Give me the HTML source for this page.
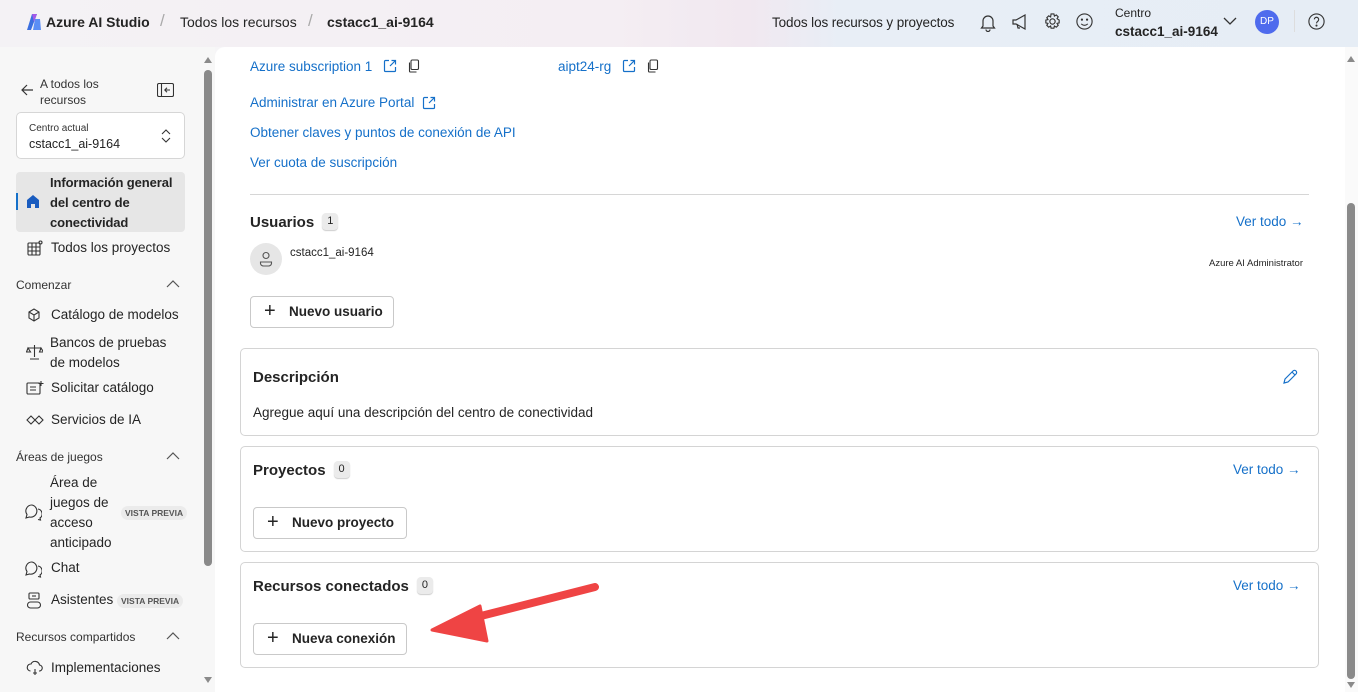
<!DOCTYPE html>
<html><head><meta charset="utf-8"><style>
*{box-sizing:border-box;margin:0;padding:0}
body{width:1358px;height:692px;overflow:hidden;font-family:"Segoe UI","Liberation Sans",sans-serif;color:#242424;background:#f6f5f7;position:relative;font-size:14px}
.a{position:absolute;white-space:nowrap}
.hdr{position:absolute;left:0;top:0;width:1358px;height:47px;background:linear-gradient(90deg,#f4f2f5 0%,#f4eef3 45%,#f1e8f0 55%,#e8eef6 62%,#e6edf5 100%)}
.side{position:absolute;left:0;top:47px;width:215px;height:645px;background:#f7f7f7}
.main{position:absolute;left:215px;top:47px;width:1130px;height:645px;background:#fff;border-top-left-radius:10px}
.lnk{color:#1570c9;font-size:13.5px}
.card{position:absolute;left:240px;width:1079px;border:1px solid #d4d4d4;border-radius:5px;background:#fff}
.btn{position:absolute;border:1px solid #c9c9c9;border-radius:4px;background:#fff;font-weight:600;font-size:13.5px;height:32px;line-height:30px;padding-left:38px}
.btn:before{content:"+";position:absolute;left:13px;top:-1px;font-weight:300;font-size:20px}
.badge{display:inline-block;background:#ebebeb;border-radius:4px;font-size:11px;font-weight:400;padding:0 5px;margin-left:8px;vertical-align:3px;line-height:17px;box-shadow:0 1px 1px #ccc}
.h{font-size:15px;font-weight:600}
.si{font-size:13.5px;color:#242424}
.sec{font-size:12px;color:#333}
.pv{background:#ebebeb;border-radius:9px;font-size:8.5px;font-weight:600;color:#555;padding:2px 4px}
svg{position:absolute}
</style></head><body>
<div class="hdr"></div>
<svg style="left:26px;top:13px" width="16" height="18" viewBox="0 0 16 18"><path d="M6 1h5l-6 16H1z" fill="#3b6fe0"/><path d="M9 6h5l1 11h-8z" fill="#5b8ef5"/><path d="M6 1h5l-3 8z" fill="#a45ae8"/></svg>
<div class="a" style="left:46px;top:14px;font-size:14px;font-weight:600">Azure AI Studio</div>
<div class="a" style="left:160px;top:11px;font-size:17px;color:#aaa">/</div>
<div class="a" style="left:180px;top:14px;font-size:14px">Todos los recursos</div>
<div class="a" style="left:308px;top:11px;font-size:17px;color:#aaa">/</div>
<div class="a" style="left:327px;top:14px;font-size:14px;font-weight:600">cstacc1_ai-9164</div>
<div class="a" style="left:772px;top:15px;font-size:13.5px;letter-spacing:-0.1px">Todos los recursos y proyectos</div>
<svg style="left:979px;top:13px" width="18" height="19" viewBox="0 0 18 19" fill="none" stroke="#333" stroke-width="1.2"><path d="M4 13V8a5 5 0 0110 0v5l1.5 2h-13z M7 16.5a2 2 0 004 0"/></svg>
<svg style="left:1011px;top:13px" width="20" height="18" viewBox="0 0 20 18" fill="none" stroke="#333" stroke-width="1.2"><path d="M2 7v4h3l9 5V2L5 7z M6 11l1 4h2"/></svg>
<svg style="left:1043px;top:12px" width="19" height="19" viewBox="0 0 20 20" fill="none" stroke="#333" stroke-width="1.2"><circle cx="10" cy="10" r="2.8"/><path d="M8.5 2h3l.5 2.3 2-1.2 2 2-1.2 2L17 8.5v3l-2.2.5 1.2 2-2 2-2-1.2-.5 2.2h-3L8 14.8l-2 1.2-2-2 1.2-2L3 11.5v-3l2.2-.5L4 6l2-2 2 1.2z"/></svg>
<svg style="left:1075px;top:12px" width="19" height="19" viewBox="0 0 20 20" fill="none" stroke="#333" stroke-width="1.2"><circle cx="10" cy="10" r="8"/><circle cx="7.3" cy="8" r=".6" fill="#333"/><circle cx="12.7" cy="8" r=".6" fill="#333"/><path d="M6.5 12.5q3.5 3 7 0"/></svg>
<div class="a" style="left:1115px;top:6px;font-size:12px">Centro</div>
<div class="a" style="left:1115px;top:24px;font-size:13.5px;font-weight:600">cstacc1_ai-9164</div>
<svg style="left:1222px;top:16px" width="16" height="10" viewBox="0 0 16 10" fill="none" stroke="#333" stroke-width="1.3"><path d="M2 2l6 6 6-6"/></svg>
<div class="a" style="left:1255px;top:10px;width:24px;height:24px;border-radius:50%;background:#4f6bed;color:#fff;font-size:10px;text-align:center;line-height:24px">DP</div>
<div class="a" style="left:1294px;top:10px;width:1px;height:22px;background:#ddd"></div>
<svg style="left:1307px;top:12px" width="19" height="19" viewBox="0 0 20 20" fill="none" stroke="#333" stroke-width="1.2"><circle cx="10" cy="10" r="8"/><path d="M7.7 7.8a2.3 2.3 0 114 1.6c-1 .8-1.7 1.2-1.7 2.6"/><circle cx="10" cy="14.3" r=".5" fill="#333"/></svg>

<div class="side"></div>
<svg style="left:20px;top:83px" width="14" height="14" viewBox="0 0 14 14" fill="none" stroke="#333" stroke-width="1.2"><path d="M13 7H2M7 2L2 7l5 5"/></svg>
<div class="a" style="left:40px;top:76px;font-size:12px;line-height:16px;color:#333">A todos los<br>recursos</div>
<svg style="left:157px;top:83px" width="17" height="14" viewBox="0 0 17 14" fill="none" stroke="#333" stroke-width="1.1"><rect x=".5" y=".5" width="16" height="13" rx="1.5"/><path d="M4.5 1v12M13 7H8m2-2.3L7.8 7 10 9.3"/></svg>
<div class="a" style="left:16px;top:112px;width:169px;height:47px;border:1px solid #d6d6d6;border-radius:5px;background:#fff"></div>
<div class="a" style="left:29px;top:123px;font-size:10px;color:#333">Centro actual</div>
<div class="a" style="left:29px;top:137px;font-size:12.5px">cstacc1_ai-9164</div>
<svg style="left:160px;top:128px" width="12" height="16" viewBox="0 0 12 16" fill="none" stroke="#333" stroke-width="1.1"><path d="M2 6l4-4 4 4M2 10l4 4 4-4"/></svg>
<div class="a" style="left:16px;top:172px;width:169px;height:60px;background:#e6e6e6;border-radius:4px"></div>
<div class="a" style="left:16px;top:193px;width:2px;height:17px;background:#1570c9"></div>
<svg style="left:26px;top:194px" width="14" height="15" viewBox="0 0 14 15"><path d="M7 1L1 6v8h4v-4h4v4h4V6z" fill="#1a5cbf"/></svg>
<div class="a" style="left:50px;top:173px;font-size:13px;font-weight:600;line-height:20px;letter-spacing:-0.1px">Información general<br>del centro de<br>conectividad</div>
<svg style="left:27px;top:240px" width="16" height="16" viewBox="0 0 16 16" fill="none" stroke="#333" stroke-width="1.1"><rect x="1" y="3" width="12" height="12" rx="1"/><path d="M1 7h12M1 11h12M5 3v12M9 3v12"/><circle cx="13.5" cy="2.5" r="1.5"/></svg>
<div class="a si" style="left:51px;top:240px">Todos los proyectos</div>
<div class="a sec" style="left:16px;top:278px">Comenzar</div>
<svg style="left:166px;top:280px" width="14" height="8" viewBox="0 0 14 8" fill="none" stroke="#555" stroke-width="1.2"><path d="M1 7l6-6 6 6"/></svg>
<svg style="left:26px;top:307px" width="17" height="17" viewBox="0 0 17 17" fill="none" stroke="#333" stroke-width="1.1"><path d="M3 5l5-3 5 3v6l-5 3-5-3zM3 5l5 3 5-3M8 8v6"/></svg>
<div class="a si" style="left:51px;top:307px">Catálogo de modelos</div>
<svg style="left:26px;top:344px" width="17" height="17" viewBox="0 0 17 17" fill="none" stroke="#333" stroke-width="1.1"><path d="M8.5 1v12M2 4h13M2 4l-1.5 4h4zM15 4l-1.5 4h4zM4 15h9"/></svg>
<div class="a si" style="left:50px;top:333px;line-height:20px">Bancos de pruebas<br>de modelos</div>
<svg style="left:26px;top:380px" width="18" height="16" viewBox="0 0 18 16" fill="none" stroke="#333" stroke-width="1.1"><rect x="1" y="3" width="13" height="11" rx="1"/><path d="M4 7h6M4 10h6M15 1v5M12.5 3.5h5"/></svg>
<div class="a si" style="left:51px;top:380px">Solicitar catálogo</div>
<svg style="left:26px;top:414px" width="18" height="12" viewBox="0 0 18 12" fill="none" stroke="#333" stroke-width="1.1"><path d="M1 6l4-4 4 4-4 4zM9 6l4-4 4 4-4 4z"/></svg>
<div class="a si" style="left:51px;top:412px">Servicios de IA</div>
<div class="a sec" style="left:16px;top:450px">Áreas de juegos</div>
<svg style="left:166px;top:452px" width="14" height="8" viewBox="0 0 14 8" fill="none" stroke="#555" stroke-width="1.2"><path d="M1 7l6-6 6 6"/></svg>
<svg style="left:24px;top:503px" width="18" height="18" viewBox="0 0 18 18" fill="none" stroke="#333" stroke-width="1.1"><path d="M8 2a6 6 0 00-5 9.5L2 15l3.5-1A6 6 0 108 2zM14 6a5 5 0 012 9l.5 2-2.5-.5"/></svg>
<div class="a si" style="left:50px;top:473px;line-height:20px">Área de<br>juegos de<br>acceso<br>anticipado</div>
<span class="a pv" style="left:121px;top:506px">VISTA PREVIA</span>
<svg style="left:24px;top:560px" width="18" height="18" viewBox="0 0 18 18" fill="none" stroke="#333" stroke-width="1.1"><path d="M8 2a6 6 0 00-5 9.5L2 15l3.5-1A6 6 0 108 2zM14 6a5 5 0 012 9l.5 2-2.5-.5"/></svg>
<div class="a si" style="left:51px;top:560px">Chat</div>
<svg style="left:26px;top:592px" width="16" height="17" viewBox="0 0 16 17" fill="none" stroke="#333" stroke-width="1.1"><rect x="3" y="1" width="10" height="6" rx="1"/><path d="M6 4h4"/><rect x="1.5" y="10" width="13" height="6" rx="3"/></svg>
<div class="a si" style="left:51px;top:592px">Asistentes</div>
<span class="a pv" style="left:117px;top:594px">VISTA PREVIA</span>
<div class="a sec" style="left:16px;top:630px">Recursos compartidos</div>
<svg style="left:166px;top:632px" width="14" height="8" viewBox="0 0 14 8" fill="none" stroke="#555" stroke-width="1.2"><path d="M1 7l6-6 6 6"/></svg>
<svg style="left:26px;top:660px" width="18" height="17" viewBox="0 0 18 17" fill="none" stroke="#333" stroke-width="1.1"><path d="M4.5 11A3.5 3.5 0 015 4a4.5 4.5 0 018.5 1 3 3 0 01-.5 6M9 9v6M7 13h4"/></svg>
<div class="a si" style="left:51px;top:660px">Implementaciones</div>
<div class="a" style="left:204px;top:57px;width:0;height:0;border:4px solid transparent;border-bottom:6px solid #8a8a8a;border-top:0"></div>
<div class="a" style="left:204px;top:70px;width:8px;height:496px;background:#8a8a8a;border-radius:4px"></div>
<div class="a" style="left:204px;top:677px;border:4px solid transparent;border-top:6px solid #8a8a8a;border-bottom:0"></div>

<div class="main"></div>
<div class="a lnk" style="left:250px;top:59px">Azure subscription 1</div>
<svg style="left:383px;top:59px" width="14" height="14" viewBox="0 0 14 14" fill="none" stroke="#1570c9" stroke-width="1.2"><path d="M6 1.5H2.5a1 1 0 00-1 1v9a1 1 0 001 1h9a1 1 0 001-1V8M8.5 1.5h4v4M12.5 1.5L7 7"/></svg>
<svg style="left:408px;top:59px" width="12" height="14" viewBox="0 0 12 14" fill="none" stroke="#333" stroke-width="1.1"><rect x="3" y="1" width="7.5" height="9.5" rx="1.2"/><path d="M1.5 3.5v8.5a1 1 0 001 1h6"/></svg>
<div class="a lnk" style="left:558px;top:59px">aipt24-rg</div>
<svg style="left:622px;top:59px" width="14" height="14" viewBox="0 0 14 14" fill="none" stroke="#1570c9" stroke-width="1.2"><path d="M6 1.5H2.5a1 1 0 00-1 1v9a1 1 0 001 1h9a1 1 0 001-1V8M8.5 1.5h4v4M12.5 1.5L7 7"/></svg>
<svg style="left:647px;top:59px" width="12" height="14" viewBox="0 0 12 14" fill="none" stroke="#333" stroke-width="1.1"><rect x="3" y="1" width="7.5" height="9.5" rx="1.2"/><path d="M1.5 3.5v8.5a1 1 0 001 1h6"/></svg>
<div class="a lnk" style="left:250px;top:95px">Administrar en Azure Portal</div>
<svg style="left:422px;top:96px" width="14" height="14" viewBox="0 0 14 14" fill="none" stroke="#1570c9" stroke-width="1.2"><path d="M6 1.5H2.5a1 1 0 00-1 1v9a1 1 0 001 1h9a1 1 0 001-1V8M8.5 1.5h4v4M12.5 1.5L7 7"/></svg>
<div class="a lnk" style="left:250px;top:125px">Obtener claves y puntos de conexión de API</div>
<div class="a lnk" style="left:250px;top:155px">Ver cuota de suscripción</div>
<div class="a" style="left:250px;top:194px;width:1059px;height:1px;background:#d6d6d6"></div>
<div class="a h" style="left:250px;top:213px">Usuarios<span class="badge">1</span></div>
<div class="a lnk" style="left:1236px;top:214px">Ver todo →</div>
<div class="a" style="left:250px;top:243px;width:32px;height:32px;border-radius:50%;background:#e6e6e6"></div>
<svg style="left:259px;top:251px" width="14" height="16" viewBox="0 0 14 16" fill="none" stroke="#555" stroke-width="1.1"><circle cx="7" cy="4.5" r="3"/><path d="M1.5 11h11v1.5a3 3 0 01-3 2.5h-5a3 3 0 01-3-2.5z"/></svg>
<div class="a" style="left:290px;top:247px;font-size:11.5px">cstacc1_ai-9164</div>
<div class="a" style="left:1209px;top:258px;font-size:9.5px">Azure AI Administrator</div>
<div class="btn" style="left:250px;top:296px;width:144px">Nuevo usuario</div>

<div class="card" style="top:348px;height:88px"></div>
<div class="a h" style="left:253px;top:369px">Descripción</div>
<svg style="left:1282px;top:369px" width="16" height="16" viewBox="0 0 16 16" fill="none" stroke="#1570c9" stroke-width="1.2"><path d="M2 14l1-4 8-8a2 2 0 013 3l-8 8zM10 3l3 3"/></svg>
<div class="a" style="left:253px;top:405px;font-size:13.5px">Agregue aquí una descripción del centro de conectividad</div>

<div class="card" style="top:446px;height:106px"></div>
<div class="a h" style="left:253px;top:461px">Proyectos<span class="badge">0</span></div>
<div class="a lnk" style="left:1233px;top:462px">Ver todo →</div>
<div class="btn" style="left:253px;top:507px;width:154px">Nuevo proyecto</div>

<div class="card" style="top:562px;height:106px"></div>
<div class="a h" style="left:253px;top:577px">Recursos conectados<span class="badge">0</span></div>
<div class="a lnk" style="left:1233px;top:578px">Ver todo →</div>
<div class="btn" style="left:253px;top:623px;width:154px">Nueva conexión</div>
<svg style="left:425px;top:580px" width="180" height="65" viewBox="0 0 180 65"><path d="M170 7L40 40" stroke="#ef4444" stroke-width="8" stroke-linecap="round"/><path d="M7 50L55 26L62 61z" fill="#ef4444" stroke="#ef4444" stroke-width="3" stroke-linejoin="round"/></svg>

<div class="a" style="left:1345px;top:47px;width:13px;height:645px;background:#fafafa"></div>
<div class="a" style="left:1347px;top:56px;border:4px solid transparent;border-bottom:6px solid #8a8a8a;border-top:0"></div>
<div class="a" style="left:1347px;top:203px;width:8px;height:476px;background:#8a8a8a;border-radius:4px"></div>
<div class="a" style="left:1347px;top:682px;border:4px solid transparent;border-top:6px solid #8a8a8a;border-bottom:0"></div>
</body></html>
